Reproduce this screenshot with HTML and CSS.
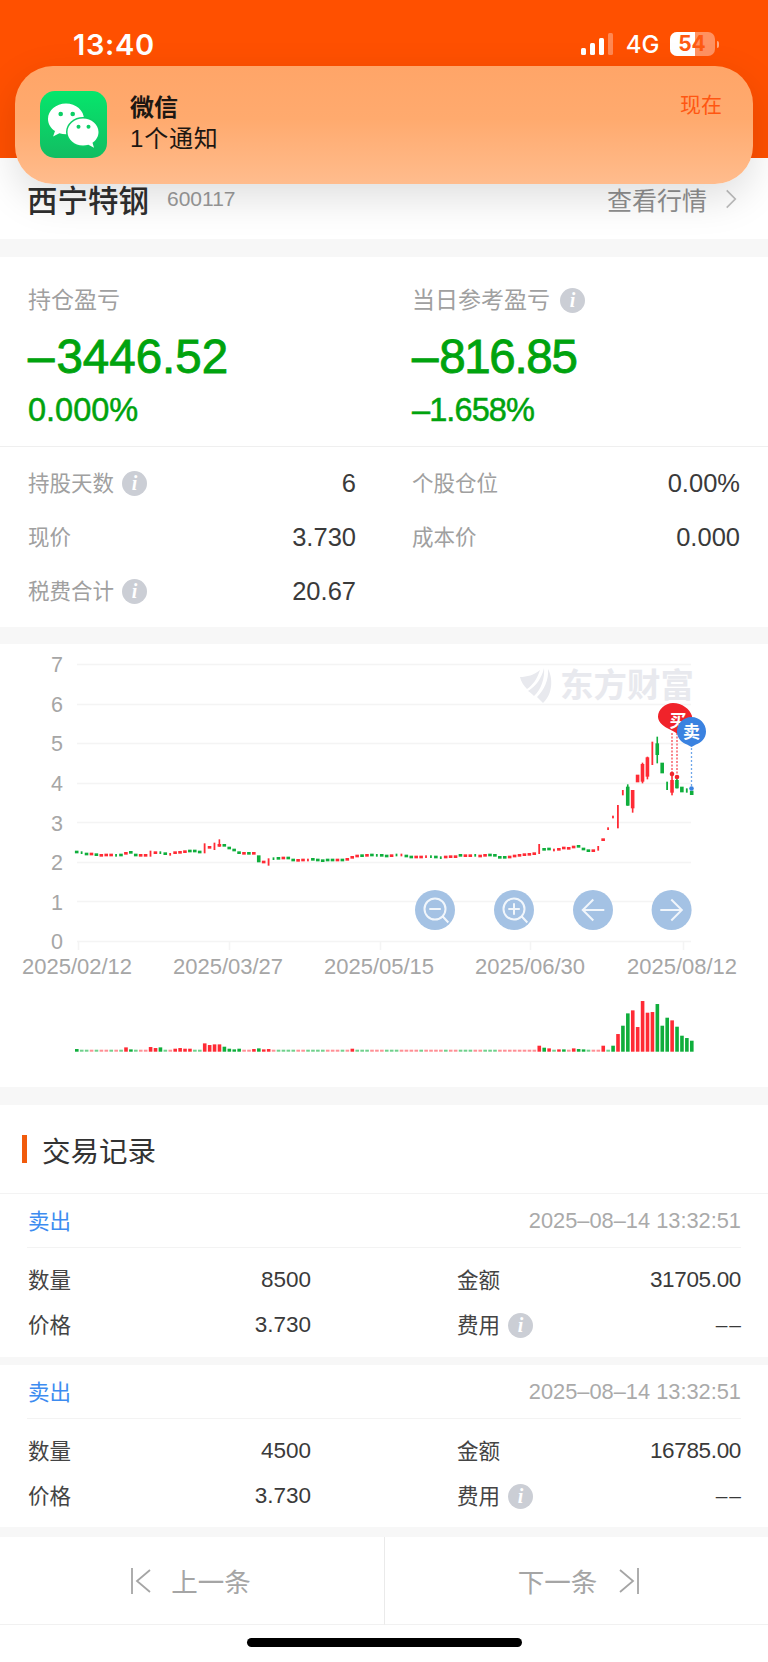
FILE: index.html
```html
<!DOCTYPE html>
<html lang="zh">
<head>
<meta charset="utf-8">
<title>西宁特钢</title>
<link rel="stylesheet" href="styles.css">
</head>
<body>
<div class="page">
  <header class="top">
    <div class="status">
      <span class="clock">13:40</span>
      <div class="status-right">
        <span class="signal"><i class="b1"></i><i class="b2"></i><i class="b3"></i><i class="b4"></i></span>
        <span class="net">4G</span>
        <span class="battery"><span class="batt-fill"></span><span class="batt-num">54</span></span>
        <span class="batt-nub"></span>
      </div>
    </div>
  </header>

  <div class="banner">
    <svg class="app-icon" viewBox="0 0 67 67">
      <defs><linearGradient id="wx" x1="0" y1="0" x2="0" y2="1"><stop offset="0" stop-color="#06e66c"/><stop offset="1" stop-color="#12bd62"/></linearGradient></defs>
      <rect width="67" height="67" rx="15" fill="url(#wx)"/>
      <path d="M26 12.500c-10 0-18 6.900-18 15.500 0 5 2.700 9.300 7 12.100l-1.900 5.400 6.300-3.200c2 .6 4.300 1 6.600 1 10 0 18-6.900 18-15.300S36 12.500 26 12.500z" fill="#fff"/>
      <ellipse cx="43" cy="41" rx="17" ry="15" fill="#0ccf66"/>
      <path d="M43 27.500c-8.500 0-15.500 6-15.500 13.500s7 13.500 15.500 13.500c1.900 0 3.700-.3 5.400-.8l5.600 3-1.500-4.900c3.700-2.500 6-6.400 6-10.800 0-7.500-7-13.500-15.500-13.500z" fill="#fff"/>
      <circle cx="20.700" cy="23" r="2.300" fill="#0ccf66"/><circle cx="32.700" cy="23" r="2.300" fill="#0ccf66"/>
      <circle cx="38.500" cy="35.700" r="2" fill="#0ccf66"/><circle cx="48.500" cy="35.700" r="2" fill="#0ccf66"/>
    </svg>
    <div class="banner-text">
      <div class="banner-title">微信</div>
      <div class="banner-sub">1个通知</div>
    </div>
    <span class="banner-time">现在</span>
  </div>

  <section class="title-row">
    <span class="stock-name">西宁特钢</span>
    <span class="stock-code">600117</span>
    <span class="quote-link">查看行情</span>
    <svg class="chev" viewBox="0 0 14 24"><path d="M2 2l10 10L2 22" fill="none" stroke="#bdbdbd" stroke-width="2"/></svg>
  </section>

  <section class="summary">
    <div class="pnl">
      <div class="pnl-col">
        <div class="pnl-label">持仓盈亏</div>
        <div class="pnl-value"><span class="minus">–</span>3446.52</div>
        <div class="pnl-pct">0.000%</div>
      </div>
      <div class="pnl-col">
        <div class="pnl-label">当日参考盈亏 <span class="info">i</span></div>
        <div class="pnl-value pnl-value-tight"><span class="minus">–</span>816.85</div>
        <div class="pnl-pct pnl-pct-tight">–1.658%</div>
      </div>
    </div>
    <div class="stats">
      <div class="stat"><span class="stat-label">持股天数 <span class="info">i</span></span><span class="stat-value">6</span></div>
      <div class="stat"><span class="stat-label">个股仓位</span><span class="stat-value">0.00%</span></div>
      <div class="stat"><span class="stat-label">现价</span><span class="stat-value">3.730</span></div>
      <div class="stat"><span class="stat-label">成本价</span><span class="stat-value">0.000</span></div>
      <div class="stat"><span class="stat-label">税费合计 <span class="info">i</span></span><span class="stat-value">20.67</span></div>
    </div>
  </section>

  <section class="chart">
    <svg class="chart-svg" viewBox="0 644 768 443" width="768" height="443">
      <g class="grid">
        <path d="M77 664.500H691M77 704.500H691M77 743.500H691M77 783.500H691M77 822.500H691M77 862.500H691M77 901.500H691M77 941.500H691"/>
        <path d="M78.500 941V950M229.500 941V950M380.500 941V950M530.500 941V950M683.500 941V950"/>
      </g>
      <g class="axis-y">
        <text x="63" y="672">7</text><text x="63" y="711.500">6</text><text x="63" y="751">5</text><text x="63" y="790.500">4</text>
        <text x="63" y="830.500">3</text><text x="63" y="870">2</text><text x="63" y="909.500">1</text><text x="63" y="949">0</text>
      </g>
      <g class="axis-x">
        <text x="77" y="974">2025/02/12</text><text x="228" y="974">2025/03/27</text><text x="379" y="974">2025/05/15</text><text x="530" y="974">2025/06/30</text><text x="682" y="974">2025/08/12</text>
      </g>
      <path class="wm" d="M520 677C527 677 534 675 540 670C537 679 533 685 527 689C524 686 521 682 520 677z"/>
      <path class="wm" d="M544 668C545 678 541 690 534 696C532 694 530 692 528 691C536 686 542 678 544 668z"/>
      <path class="wm" d="M548 669C553 678 553 694 543 703C541 701 539 699 537 697C544 690 549 680 548 669z"/>
      <text class="wm-text" x="560" y="697">东方财富</text>
      <g id="candles"></g>
      <g id="vols"></g>
      <g class="dots-r"><path d="M672 733V773M677 733V777"/></g>
      <circle cx="672" cy="774" r="2.300" fill="#f0262c"/><circle cx="677" cy="777" r="2.300" fill="#f0262c"/>
      <path class="dots-b" d="M691.500 748V788"/>
      <circle cx="691.500" cy="788.500" r="2.300" fill="#3a82e0"/>
      <path d="M673 703c9 0 17 6 19 13 1 7-2 14-10 17l-5 .5c-3-2-7-4-11-6-5-3-8-7-8-11 0-7 7-13.500 15-13.500z" fill="#f0232a"/>
      <text class="pin-text" x="678" y="727">买</text>
      <path d="M691.500 717c8 0 14.500 6.500 14.500 14.500 0 7-5 11.500-10 13l-4.500 2.500-4.500-2.500c-5-1.500-10-6-10-13 0-8 6.500-14.500 14.500-14.500z" fill="#3a82e0"/>
      <text class="pin-text" x="691.500" y="738">卖</text>
      <g class="btn">
        <circle class="btn-bg" cx="435" cy="910" r="20"/>
        <circle class="btn-line" cx="435" cy="909" r="10.500"/>
        <path class="btn-line" d="M429.300 909h11.500M442.800 916.500l5.500 6"/>
        <circle class="btn-bg" cx="514" cy="910" r="20"/>
        <circle class="btn-line" cx="514" cy="909" r="10.500"/>
        <path class="btn-line" d="M508.300 909h11.500M514 903.300v11.500M521.800 916.500l5.500 6"/>
        <circle class="btn-bg" cx="593" cy="910" r="20"/>
        <path class="btn-line" d="M604.300 910h-21.500M593.300 899.500l-10.500 10.500 10.500 10.500"/>
        <circle class="btn-bg" cx="671.600" cy="910" r="20"/>
        <path class="btn-line" d="M660.300 910h21.500M671.300 899.500l10.500 10.500-10.500 10.500"/>
      </g>
    </svg>
  </section>

  <section class="trades">
    <h2 class="trades-title"><span class="trades-mark"></span>交易记录</h2>
    <article class="trade">
      <div class="trade-head"><span class="trade-type">卖出</span><span class="trade-time">2025–08–14 13:32:51</span></div>
      <div class="trade-body">
        <div class="cell"><span>数量</span><span class="num">8500</span></div>
        <div class="cell"><span>金额</span><span class="num num-tight">31705.00</span></div>
        <div class="cell"><span>价格</span><span class="num">3.730</span></div>
        <div class="cell"><span>费用 <span class="info">i</span></span><span class="num num-dash">––</span></div>
      </div>
    </article>
    <article class="trade trade-next">
      <div class="trade-head"><span class="trade-type">卖出</span><span class="trade-time">2025–08–14 13:32:51</span></div>
      <div class="trade-body">
        <div class="cell"><span>数量</span><span class="num">4500</span></div>
        <div class="cell"><span>金额</span><span class="num num-tight">16785.00</span></div>
        <div class="cell"><span>价格</span><span class="num">3.730</span></div>
        <div class="cell"><span>费用 <span class="info">i</span></span><span class="num num-dash">––</span></div>
      </div>
    </article>
  </section>

  <nav class="pager">
    <div class="pager-btn">
      <svg class="pager-icon" viewBox="0 0 20 26"><path d="M1 0v26M19 2L6 13l13 11" fill="none" stroke="#a5a5a5" stroke-width="1.800"/></svg>
      <span>上一条</span>
    </div>
    <div class="pager-btn pager-right">
      <span>下一条</span>
      <svg class="pager-icon" viewBox="0 0 20 26"><path d="M19 0v26M1 2l13 11L1 24" fill="none" stroke="#a5a5a5" stroke-width="1.800"/></svg>
    </div>
  </nav>
  <div class="home-area"><span class="home-bar"></span></div>
</div>
<script src="script.js"></script>
</body>
</html>
```
FILE: styles.css
```css
* { box-sizing: border-box; }
html, body { margin: 0; padding: 0; }
body {
  width: 768px;
  height: 1662px;
  overflow: hidden;
  background: #f7f7f7;
  font-family: "Liberation Sans", "Noto Sans CJK SC", sans-serif;
  color: #333;
}
.page { position: relative; width: 768px; height: 1662px; overflow: hidden; }

.top { height: 158px; background: #ff5000; }
.status { display: flex; align-items: center; justify-content: space-between; height: 88px; padding: 0 49px 0 73px; }
.clock { font-family: Inter, "Liberation Sans", sans-serif; font-size: 29px; font-weight: 600; color: #fff; letter-spacing: .7px; }
.status-right { display: flex; align-items: center; }
.signal { display: flex; align-items: flex-end; gap: 4px; height: 22px; margin-right: 13px; }
.signal i { display: block; width: 5px; background: #fff; border-radius: 1.500px; }
.b1 { height: 7px; } .b2 { height: 12px; } .b3 { height: 17px; }
.signal .b4 { height: 22px; background: rgba(255,255,255,.32); }
.net { font-family: Inter, "Liberation Sans", sans-serif; font-size: 24px; font-weight: 500; color: #fff; margin-right: 10px; }
.battery { position: relative; display: block; width: 45px; height: 24px; border-radius: 7px; background: rgba(255,255,255,.38); overflow: hidden; }
.batt-fill { display: block; width: 25px; height: 24px; background: #fff; }
.batt-num { position: absolute; inset: 0; text-align: center; font-family: Inter, "Liberation Sans", sans-serif; font-size: 21px; line-height: 24px; font-weight: 700; color: #ff5a12; }
.batt-nub { width: 2.500px; height: 7px; margin-left: 2px; background: rgba(255,255,255,.5); border-radius: 0 2px 2px 0; }

.banner {
  position: absolute; left: 15px; top: 66px; width: 738px; height: 118px;
  display: flex; align-items: flex-start; padding: 25px 31px 0 25px;
  border-radius: 38px;
  background: linear-gradient(180deg, #ffa568 0%, #ffaa6e 45%, #ffbc8d 100%);
  box-shadow: 0 14px 40px rgba(0,0,0,.13);
  z-index: 2;
}
.app-icon { width: 67px; height: 67px; flex: none; }
.banner-text { margin-left: 23px; color: #1d1712; }
.banner-title { font-size: 24px; line-height: 32px; font-weight: 700; margin-top: 1px; }
.banner-sub { font-size: 24px; line-height: 30px; letter-spacing: .8px; }
.banner-time { margin-left: auto; font-size: 21px; line-height: 28px; color: #ff5712; }

.title-row { display: flex; align-items: center; height: 81px; padding: 0 31px 0 27px; background: #fff; }
.stock-name { font-size: 30.500px; font-weight: 500; color: #2f2f2f; }
.stock-code { margin-left: 18px; font-size: 21px; color: #9a9a9a; }
.quote-link { margin-left: auto; font-size: 25px; color: #8f8f8f; }
.chev { width: 12px; height: 22px; margin-left: 18px; }

.summary { margin-top: 18px; background: #fff; }
.pnl { display: grid; grid-template-columns: 384px 1fr; height: 190px; padding: 28px 0 0 28px; border-bottom: 1px solid #efefef; }
.pnl-label { display: flex; align-items: center; gap: 2px; font-size: 23px; line-height: 30px; color: #a0a0a0; }
.pnl-value { margin-top: 12px; font-size: 47.500px; line-height: 60px; color: #00a30e; -webkit-text-stroke: .9px #00a30e; }
.minus { margin-right: 2px; }
.pnl-value-tight { letter-spacing: -1.300px; }
.pnl-pct { margin-top: 3px; font-size: 32.500px; line-height: 40px; color: #00a30e; -webkit-text-stroke: .5px #00a30e; }
.pnl-pct-tight { letter-spacing: -.9px; }
.stats { display: grid; grid-template-columns: 328px 328px; column-gap: 56px; height: 180px; padding: 9px 0 0 28px; grid-auto-rows: 54px; }
.stat { display: flex; align-items: center; justify-content: space-between; }
.stat-label { display: flex; align-items: center; gap: 8px; padding-bottom: 3px; font-size: 21.500px; color: #a0a0a0; }
.stat-label .info { margin-top: 3px; }
.stat-value { font-size: 25.500px; color: #3a3a3a; }
.info {
  display: inline-flex; align-items: center; justify-content: center; flex: none;
  width: 25px; height: 25px; border-radius: 50%;
  background: #cbced5; color: #fff;
  font-family: "Liberation Serif", serif; font-style: italic; font-weight: 700; font-size: 20px; line-height: 25px;
}
.pnl-label .info { margin-left: 8px; }

.chart { margin-top: 17px; height: 443px; background: #fff; }
.chart-svg { display: block; }
.grid path { fill: none; stroke: #f4f4f4; stroke-width: 1.500; }
.axis-y text { font-size: 21.500px; fill: #a6a6a6; text-anchor: end; }
.axis-x text { font-size: 22px; fill: #a6a6a6; text-anchor: middle; }
.wm { fill: #e8e9ee; }
.wm-text { font-size: 33.500px; font-weight: 700; fill: #e8e9ee; }
.dots-r path { fill: none; stroke: #f8636a; stroke-width: 1.500; stroke-dasharray: 2 1.500; }
.dots-b { fill: none; stroke: #6ea6ea; stroke-width: 1.300; stroke-dasharray: 2 2; }
.pin-text { font-size: 17px; font-weight: 700; fill: #fff; text-anchor: middle; }
.btn-bg { fill: #a4c2e4; }
.btn-line { fill: none; stroke: #fff; stroke-opacity: .85; stroke-width: 2; }

.trades { margin-top: 18px; background: #fff; }
.trades-title { display: flex; align-items: center; height: 89px; margin: 0; padding: 0 0 0 22px; border-bottom: 1px solid #f3f3f3; font-size: 28.500px; font-weight: 400; color: #333; }
.trades-mark { width: 5px; height: 28px; margin-right: 15px; background: #f15b0c; }
.trade { height: 163px; }
.trade-next { height: 170px; border-top: 8px solid #f7f7f7; }
.trade-head { display: flex; align-items: center; justify-content: space-between; height: 54px; margin: 0 27px; padding: 0 0 0 1px; border-bottom: 1px solid #f3f3f3; }
.trade-type { padding-bottom: 3px; font-size: 21.500px; color: #3d8cf0; }
.trade-time { font-size: 21.800px; color: #aaa; }
.trade-body { display: grid; grid-template-columns: 283px 284px; column-gap: 146px; grid-auto-rows: 45px; padding: 9px 0 0 28px; }
.cell { display: flex; align-items: center; justify-content: space-between; font-size: 21.500px; color: #444; }
.cell > span:first-child { display: flex; align-items: center; gap: 8px; padding-bottom: 2px; }
.cell .info { margin-top: 4px; }
.num { font-size: 22.500px; color: #3a3a3a; }
.num-tight { letter-spacing: -.35px; }
.num-dash { font-size: 21px; letter-spacing: 2px; margin-right: -2px; }

.pager { display: flex; height: 98px; padding-top: 10px; background: #f7f7f7; }
.pager-btn { flex: 0 0 385px; display: flex; align-items: center; justify-content: center; gap: 20px; padding-right: 2px; background: #fff; font-size: 26.500px; color: #a5a5a5; border-right: 1px solid #eaeaea; border-bottom: 1px solid #f1f1f1; }
.pager-right { flex: 1; padding: 0 0 0 4px; border-right: 0; gap: 22px; }
.pager-icon { width: 20px; height: 26px; }
.home-area { display: flex; justify-content: center; height: 37px; padding-top: 13px; background: #fff; }
.home-bar { display: block; width: 275px; height: 9px; border-radius: 5px; background: #000; }
```
FILE: script.js
```js
var SVG = "http://www.w3.org/2000/svg";
var RED = "#ff2b35", GREEN = "#0fae3c";

function rect(parent, x, y, w, h, fill) {
  var r = document.createElementNS(SVG, "rect");
  r.setAttribute("x", x.toFixed(2));
  r.setAttribute("y", y.toFixed(2));
  r.setAttribute("width", w);
  r.setAttribute("height", h.toFixed(2));
  r.setAttribute("fill", fill);
  parent.appendChild(r);
}

/* token: colour letter (upper case = thin), then body centre or top-bottom, then optional wick top-bottom; values in chart units */
var candles = ("g636 G638 g642 r642 g644 r646 r645 r645 G646 g645 r640 g637 g645 r646 r646 R632-650 r638 G638 g641 R643 r638 r637 r635 g633 g633 g636 R610-640 r622 R608-630 r612-620-598-620 g616 g624 g630 g638 r640 g640 r640 g646-667 r666 R655-677 G656 g655 r654 g654 g660 r661 r660 R660 g658 g660 g662 g660 g660 r660 g660 r658 r652 r648 g647 r646 g645 G646 g646 " +
  "g648 r647 G645 R645 g648 g651 r651 r651 R650 G650 g651 G653 r651 r650 r650 g646 r647 r647 G646 r648 r646 g645 g646 g652 g652 r651 r648 r646 r644 r643 r641 R612-642 g628 g627 R630 r628 r624 r625 r621 g619 g627 g632 r632 R618-632 r599 R566 R531 R495-565 R450-466 g440-497-433-497 r450-505-450-518 r404-427 r372-425-368-430 r352-410-350-418 R305-375 g310-345-290-370 g368-400 G425-450 r420-458-395-466 g420-445-412-445 g440-457 G445-458 g452-465").split(" ");

var vols = ("g8 g6 g5 r5 g5 r3 r3 g4 r4 g4 r13 g7 g5 r4 r4 r14 r11 g13 g6 r3 r9 r11 r9 r9 g6 g4 r25 r20 r22 r22 g15 g9 g7 g9 r5 r4 r8 g10 r7 r8 r6 g4 g5 " +
  "g4 g4 r3 r3 g3 g3 g4 g4 r6 r4 r5 g4 r6 r9 g4 g4 g5 r4 r3 r5 g3 g2 g4 r3 r3 r3 r3 g3 r3 r3 r4 r3 g3 r5 r4 g4 g3 g4 r4 r4 g3 g3 g2 r3 r3 r3 r3 r3 r5 r4 r3 " +
  "r18 g12 r10 g6 r7 g7 r5 r10 g8 g7 g5 r5 r6 r18 g6 g18 r53 g78 g115 r124 r74 r152 r117 r119 g143 g78 g102 r94 g75 g48 g41 g33").split(" ");

var candleGroup = document.getElementById("candles");
var volGroup = document.getElementById("vols");

candles.forEach(function (tok, i) {
  var thin = tok.charAt(0) === tok.charAt(0).toUpperCase();
  var colour = tok.charAt(0).toLowerCase() === "r" ? RED : GREEN;
  var parts = tok.slice(1).split("-").map(Number);
  var cx = 76.7 + 4.92 * i;
  var w = thin ? 1.8 : 3.6;
  var top = parts.length > 1 ? parts[0] : parts[0] - 4;
  var bot = parts.length > 1 ? parts[1] : parts[0] + 4;
  if (parts.length === 4) {
    rect(candleGroup, cx - 0.8, 640 + parts[2] / 3, 1.6, (parts[3] - parts[2]) / 3, colour);
  }
  rect(candleGroup, cx - w / 2, 640 + top / 3, w, (bot - top) / 3, colour);
});

vols.forEach(function (tok, i) {
  var h = Math.max(Number(tok.slice(1)) / 3, 2);
  var isRed = tok.charAt(0) === "r";
  var colour = isRed ? (h <= 2 ? "#ff8f95" : RED) : (h <= 2 ? "#6fd08c" : GREEN);
  rect(volGroup, 75 + 4.92 * i, 1051.7 - h, 3.6, h, colour);
});
```
